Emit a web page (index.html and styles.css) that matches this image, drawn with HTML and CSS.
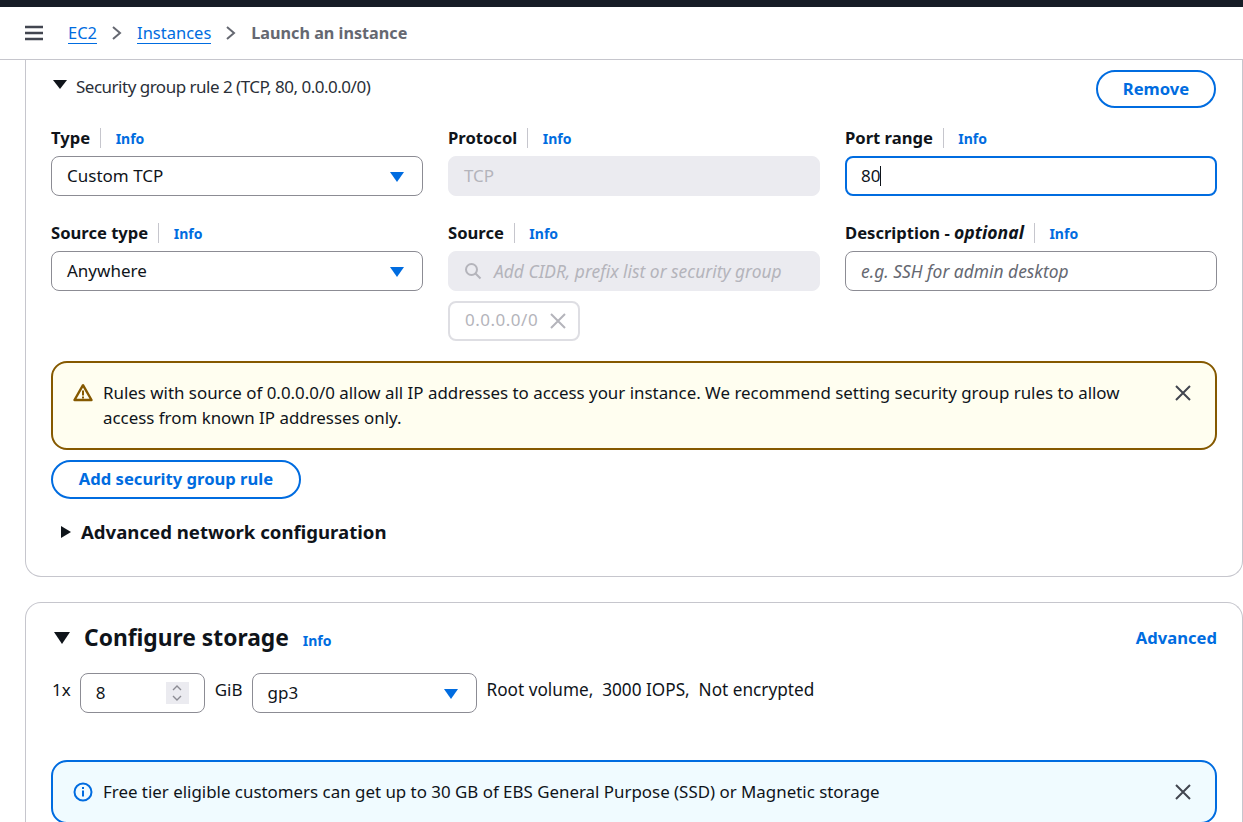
FILE: index.html
```html
<!DOCTYPE html>
<html lang="en">
<head>
  <title>Launch an instance</title>
  <meta charset="UTF-8">
  <link rel="stylesheet" href="styles.css">
</head>
<body>
  <div class="topbar"></div>
  <header class="crumbs">
    <svg class="menu" width="20" height="16" viewBox="0 0 20 16"><path d="M1 2h18M1 8h18M1 14h18" stroke="#424650" stroke-width="2.4" fill="none"/></svg>
    <a class="crumb" href="#">EC2</a>
    <svg class="chev" width="12" height="16" viewBox="0 0 12 16"><path d="M2 2l7 6-7 6" stroke="#656871" stroke-width="2" fill="none"/></svg>
    <a class="crumb" href="#">Instances</a>
    <svg class="chev" width="12" height="16" viewBox="0 0 12 16"><path d="M2 2l7 6-7 6" stroke="#656871" stroke-width="2" fill="none"/></svg>
    <span class="crumb-now">Launch an instance</span>
  </header>

  <main class="content">
    <section class="card card-cut">
      <div class="rule-head">
        <div class="rule-title"><span class="tri-down small"></span><span>Security group rule 2 (TCP, 80, 0.0.0.0/0)</span></div>
        <button class="btn btn-remove">Remove</button>
      </div>

      <div class="grid">
        <div class="field">
          <div class="label"><b>Type</b><a class="info" href="#">Info</a></div>
          <div class="input select">Custom TCP<span class="caret"></span></div>
        </div>
        <div class="field">
          <div class="label"><b>Protocol</b><a class="info" href="#">Info</a></div>
          <div class="input disabled">TCP</div>
        </div>
        <div class="field">
          <div class="label"><b>Port range</b><a class="info" href="#">Info</a></div>
          <div class="input focused">80<span class="cursor"></span></div>
        </div>
        <div class="field">
          <div class="label"><b>Source type</b><a class="info" href="#">Info</a></div>
          <div class="input select">Anywhere<span class="caret"></span></div>
        </div>
        <div class="field">
          <div class="label"><b>Source</b><a class="info" href="#">Info</a></div>
          <div class="input disabled search">
            <svg width="18" height="18" viewBox="0 0 18 18"><circle cx="7.5" cy="7.5" r="5.5" stroke="#b4b4bb" stroke-width="2" fill="none"/><path d="M11.5 11.5l5 5" stroke="#b4b4bb" stroke-width="2" fill="none"/></svg>
            <em>Add CIDR, prefix list or security group</em>
          </div>
          <div class="token">0.0.0.0/0
            <svg width="18" height="18" viewBox="0 0 18 18"><path d="M2 2l14 14M16 2L2 16" stroke="#b4b4bb" stroke-width="2" fill="none"/></svg>
          </div>
        </div>
        <div class="field">
          <div class="label"><b>Description - <i>optional</i></b><a class="info" href="#">Info</a></div>
          <div class="input placeholder">e.g. SSH for admin desktop</div>
        </div>
      </div>

      <div class="alert alert-warn">
        <svg class="alert-icon" width="20" height="20" viewBox="0 0 20 20"><path d="M10 2.2L1.5 17h17z" stroke="#855900" stroke-width="2.4" stroke-linejoin="round" fill="none"/><path d="M10 7.5v5M10 13.6v2" stroke="#855900" stroke-width="2" fill="none"/></svg>
        <p>Rules with source of 0.0.0.0/0 allow all IP addresses to access your instance. We recommend setting security group rules to allow access from known IP addresses only.</p>
        <svg class="alert-close" width="16" height="16" viewBox="0 0 16 16"><path d="M1 1l14 14M15 1L1 15" stroke="#424650" stroke-width="2" fill="none"/></svg>
      </div>

      <button class="btn btn-add">Add security group rule</button>

      <div class="advanced"><span class="tri-right"></span><span>Advanced network configuration</span></div>
    </section>

    <section class="card card-storage">
      <div class="storage-head">
        <span class="tri-down"></span>
        <h2>Configure storage</h2>
        <a class="info" href="#">Info</a>
        <a class="advanced-link" href="#">Advanced</a>
      </div>

      <div class="storage-row">
        <span class="txt-1x">1x</span>
        <div class="input number">8
          <span class="spin">
            <svg width="10" height="18" viewBox="0 0 10 18"><path d="M1 6l4-4 4 4M1 12l4 4 4-4" stroke="#8c8c94" stroke-width="1.4" fill="none"/></svg>
          </span>
        </div>
        <span class="txt-gib">GiB</span>
        <div class="input select volume">gp3<span class="caret"></span></div>
        <span class="summary">Root volume,&nbsp; 3000 IOPS,&nbsp; Not encrypted</span>
      </div>

      <div class="alert alert-info">
        <svg class="alert-icon" width="20" height="20" viewBox="0 0 20 20"><circle cx="10" cy="10" r="8.5" stroke="#006ce0" stroke-width="2" fill="none"/><path d="M10 8.5v6M10 5v2" stroke="#006ce0" stroke-width="2" fill="none"/></svg>
        <p>Free tier eligible customers can get up to 30 GB of EBS General Purpose (SSD) or Magnetic storage</p>
        <svg class="alert-close" width="16" height="16" viewBox="0 0 16 16"><path d="M1 1l14 14M15 1L1 15" stroke="#424650" stroke-width="2" fill="none"/></svg>
      </div>
    </section>
  </main>
</body>
</html>
```

FILE: styles.css
```css
* {
  box-sizing: border-box;
}
html, body {
  height: 822px;
  overflow: hidden;
}
body {
  margin: 0;
  background: white;
  color: #0f141a;
  font-family: "Noto Sans", "Open Sans", sans-serif;
  font-size: 17px;
  line-height: 20px;
}
a {
  text-decoration: none;
}

.topbar {
  height: 7px;
  background: #161d26;
}
.crumbs {
  height: 53px;
  display: flex;
  align-items: center;
  padding: 0 0 0 24px;
  border-bottom: 1px solid #c6c6cd;
  background: white;
}
.menu {
  margin-right: 24px;
}
.crumb {
  color: #006ce0;
  border-bottom: 1px solid #006ce0;
  font-size: 16.5px;
  line-height: 20px;
}
.chev {
  margin: 0 14px;
}
.crumb-now {
  color: #656871;
  font-size: 16.2px;
  font-weight: 700;
}

.content {
  height: 762px;
  overflow: hidden;
  padding: 0 0 0 25px;
}
.card {
  border: 1px solid #c6c6cd;
  border-radius: 16px;
  padding: 0 25px 0 25px;
  background: white;
  margin-bottom: 25px;
}
.card-cut {
  border-top: none;
  border-top-left-radius: 0;
  border-top-right-radius: 0;
  height: 517px;
}
.card-storage {
  height: 220px;
  margin-bottom: 0;
  overflow: hidden;
  border-bottom: none;
  border-bottom-left-radius: 0;
  border-bottom-right-radius: 0;
}

.rule-head {
  display: flex;
  justify-content: space-between;
  padding-top: 10px;
  height: 68px;
}
.rule-title {
  display: flex;
  align-items: flex-start;
  gap: 9px;
  padding-top: 7px;
  letter-spacing: -0.5px;
  color: #2a2f38;
}
.tri-down {
  width: 0;
  height: 0;
  margin-left: 3px;
  border-left: 8px solid transparent;
  border-right: 8px solid transparent;
  border-top: 12px solid #0f141a;
}
.tri-down.small {
  border-left-width: 7px;
  border-right-width: 7px;
  border-top-width: 9px;
  margin: 3px 0 0 2px;
}
.tri-right {
  width: 0;
  height: 0;
  border-top: 6px solid transparent;
  border-bottom: 6px solid transparent;
  border-left: 10px solid #0f141a;
}

.btn {
  height: 38px;
  background: white;
  border: 2px solid #006ce0;
  border-radius: 20px;
  color: #006ce0;
  font: 700 16.6px/20px "Noto Sans", sans-serif;
}
.btn-remove {
  width: 120px;
  margin-right: 1px;
}
.btn-add {
  width: 250px;
  height: 39px;
  display: block;
  margin-top: 10px;
  padding-bottom: 3px;
}

.grid {
  display: grid;
  grid-template-columns: 372px 372px 372px;
  column-gap: 25px;
  row-gap: 27px;
}
.label {
  display: flex;
  align-items: center;
  height: 20px;
  margin-bottom: 8px;
  font-size: 16.6px;
}
.label b {
  height: 20px;
  padding-right: 10px;
  border-right: 1px solid #c6c6cd;
  line-height: 19px;
}
.label i {
  font-size: 17.6px;
  line-height: 0;
}
.info {
  color: #006ce0;
  font-size: 14px;
  font-weight: 700;
  margin: 2px 0 0 14.5px;
}
.input {
  height: 40px;
  display: flex;
  align-items: center;
  position: relative;
  padding: 0 15px;
  border: 1px solid #8c8c94;
  border-radius: 8px;
  background: white;
}
.caret {
  position: absolute;
  right: 18px;
  top: 15px;
  width: 0;
  height: 0;
  border-left: 7px solid transparent;
  border-right: 7px solid transparent;
  border-top: 10px solid #006ce0;
}
.disabled {
  background: #ebebf0;
  border-color: #ebebf0;
  color: #b4b4bb;
}
.focused {
  border: 2px solid #006ce0;
  padding: 0 14px;
}
.cursor {
  width: 1px;
  height: 20px;
  background: #0f141a;
}
.placeholder {
  color: #656871;
  font-size: 17.4px;
  font-style: italic;
}
.search {
  gap: 12px;
  font-size: 17.4px;
}
.token {
  width: 132px;
  height: 40px;
  margin-top: 10px;
  display: flex;
  align-items: center;
  justify-content: space-between;
  padding: 0 11px 2px 15px;
  border: 2px solid #dedee3;
  border-radius: 8px;
  color: #b4b4bb;
  letter-spacing: 0.5px;
}
.token svg {
  margin-top: 2px;
}

.alert {
  display: flex;
  align-items: flex-start;
  width: 1166px;
  border: 2px solid;
  border-radius: 16px;
  font-size: 16.9px;
}
.alert p {
  margin: 0;
  flex: 1;
  line-height: 25px;
}
.alert-icon {
  flex: none;
  margin: 3px 10px 0 0;
}
.alert-close {
  flex: none;
  margin: 5px 10px 0 40px;
}
.alert-warn {
  height: 89px;
  margin-top: 20px;
  padding: 17px 14px 0 20px;
  background: #fffef0;
  border-color: #855900;
}
.alert-info {
  height: 64px;
  margin-top: 47px;
  padding: 17px 14px 0 20px;
  background: #f0fbff;
  border-color: #006ce0;
}

.advanced {
  display: flex;
  align-items: center;
  gap: 10px;
  margin: 23px 0 0 10px;
  font-size: 18.6px;
  font-weight: 700;
}

.storage-head {
  display: flex;
  align-items: center;
  padding-top: 14px;
  height: 56px;
}
.storage-head h2 {
  margin: 0 14px 0 14px;
  font-size: 22.8px;
  line-height: 30px;
  font-weight: 700;
}
.storage-head .info {
  margin: 6px 0 0 0;
}
.advanced-link {
  margin-left: auto;
  color: #006ce0;
  font-size: 16.6px;
  font-weight: 700;
}
.storage-row {
  display: flex;
  align-items: flex-start;
  margin-top: 14px;
}
.txt-1x {
  padding-top: 7px;
  margin: 0 9px 0 1px;
}
.txt-gib {
  padding-top: 7px;
  margin: 0 9px 0 10px;
}
.number {
  width: 125px;
}
.spin {
  position: absolute;
  right: 15px;
  top: 8px;
  width: 23px;
  height: 22px;
  background: #ebebf0;
  display: flex;
  align-items: center;
  justify-content: center;
}
.volume {
  width: 225px;
}
.summary {
  padding-top: 7px;
  margin-left: 10px;
  font-size: 17.2px;
}
```
